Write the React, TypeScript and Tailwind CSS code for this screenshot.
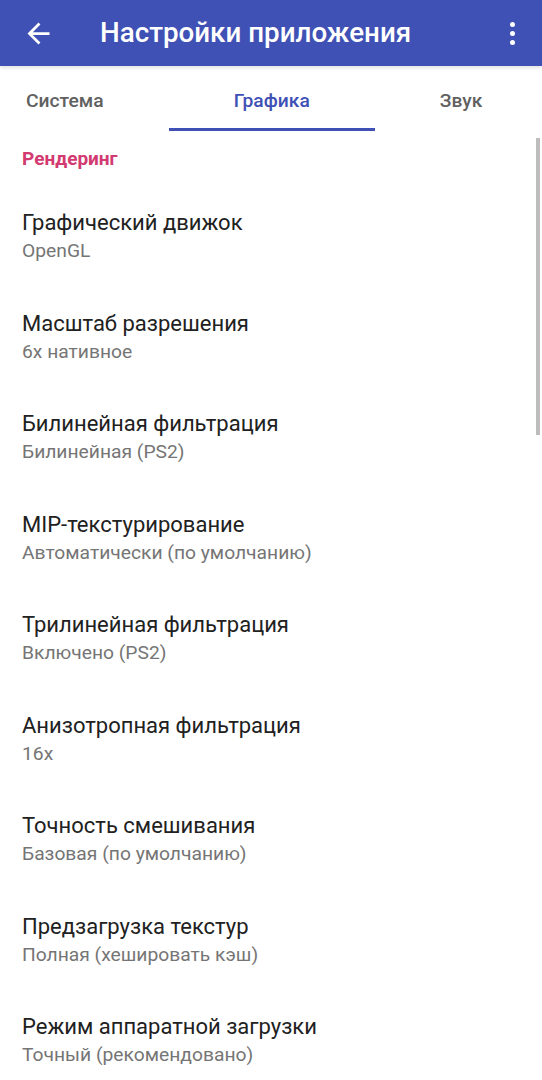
const settings = [
  { title: "Графический движок", value: "OpenGL" },
  { title: "Масштаб разрешения", value: "6x нативное" },
  { title: "Билинейная фильтрация", value: "Билинейная (PS2)" },
  { title: "MIP-текстурирование", value: "Автоматически (по умолчанию)" },
  { title: "Трилинейная фильтрация", value: "Включено (PS2)" },
  { title: "Анизотропная фильтрация", value: "16x" },
  { title: "Точность смешивания", value: "Базовая (по умолчанию)" },
  { title: "Предзагрузка текстур", value: "Полная (хешировать кэш)" },
  { title: "Режим аппаратной загрузки", value: "Точный (рекомендовано)" },
];

const tabs = ["Система", "Графика", "Звук"];

export default function App() {
  return (
    <div className="relative w-[542px] h-[1080px] overflow-hidden bg-white font-['Roboto','Noto_Sans',sans-serif]">
      {/* app bar */}
      <div className="relative z-10 h-[66px] bg-[#3f51b5] flex items-center shadow-[0_2px_4px_rgba(0,0,0,0.12)]">
        <svg
          viewBox="0 0 24 24"
          width="33"
          height="33"
          fill="white"
          className="ml-[22px]"
        >
          <path d="M20 11H7.83l5.59-5.59L12 4l-8 8 8 8 1.41-1.41L7.83 13H20v-2z" />
        </svg>
        <h1 className="ml-[45px] text-white text-[27.75px] font-medium">
          Настройки приложения
        </h1>
        <div className="ml-auto mr-[27px] flex flex-col items-center gap-[4px]">
          <span className="w-[5px] h-[5px] rounded-full bg-white" />
          <span className="w-[5px] h-[5px] rounded-full bg-white" />
          <span className="w-[5px] h-[5px] rounded-full bg-white" />
        </div>
      </div>

      {/* tabs (scrollable, scrolled a little to the right) */}
      <div className="mt-[4px] h-[62px] flex -ml-[39px]">
        {tabs.map((t, i) => (
          <div
            key={t}
            className="relative shrink-0 px-[65px] flex items-center justify-center"
          >
            <span
              className={
                i === 1
                  ? "text-[19.25px] font-medium text-[#3f51b5]"
                  : "text-[19.25px] font-medium text-[#616161]"
              }
            >
              {t}
            </span>
            {i === 1 && (
              <div className="absolute left-0 right-0 bottom-[1px] h-[3px] bg-[#3f51b5]" />
            )}
          </div>
        ))}
      </div>

      {/* settings list */}
      <div className="h-[55px] flex items-center px-[22px]">
        <span className="text-[19px] font-bold text-[#d23a70]">Рендеринг</span>
      </div>
      <div className="flex flex-col">
        {settings.map((s) => (
          <div
            key={s.title}
            className="h-[100.5px] shrink-0 flex flex-col justify-center px-[22px]"
          >
            <div className="text-[22px] leading-[28px] text-[#212121]">
              {s.title}
            </div>
            <div className="text-[19.25px] leading-[28px] text-[#757575]">
              {s.value}
            </div>
          </div>
        ))}
      </div>

      {/* scrollbar */}
      <div className="absolute right-[2px] top-[138px] w-[4px] h-[297px] bg-[#bdbdbd]" />
    </div>
  );
}
